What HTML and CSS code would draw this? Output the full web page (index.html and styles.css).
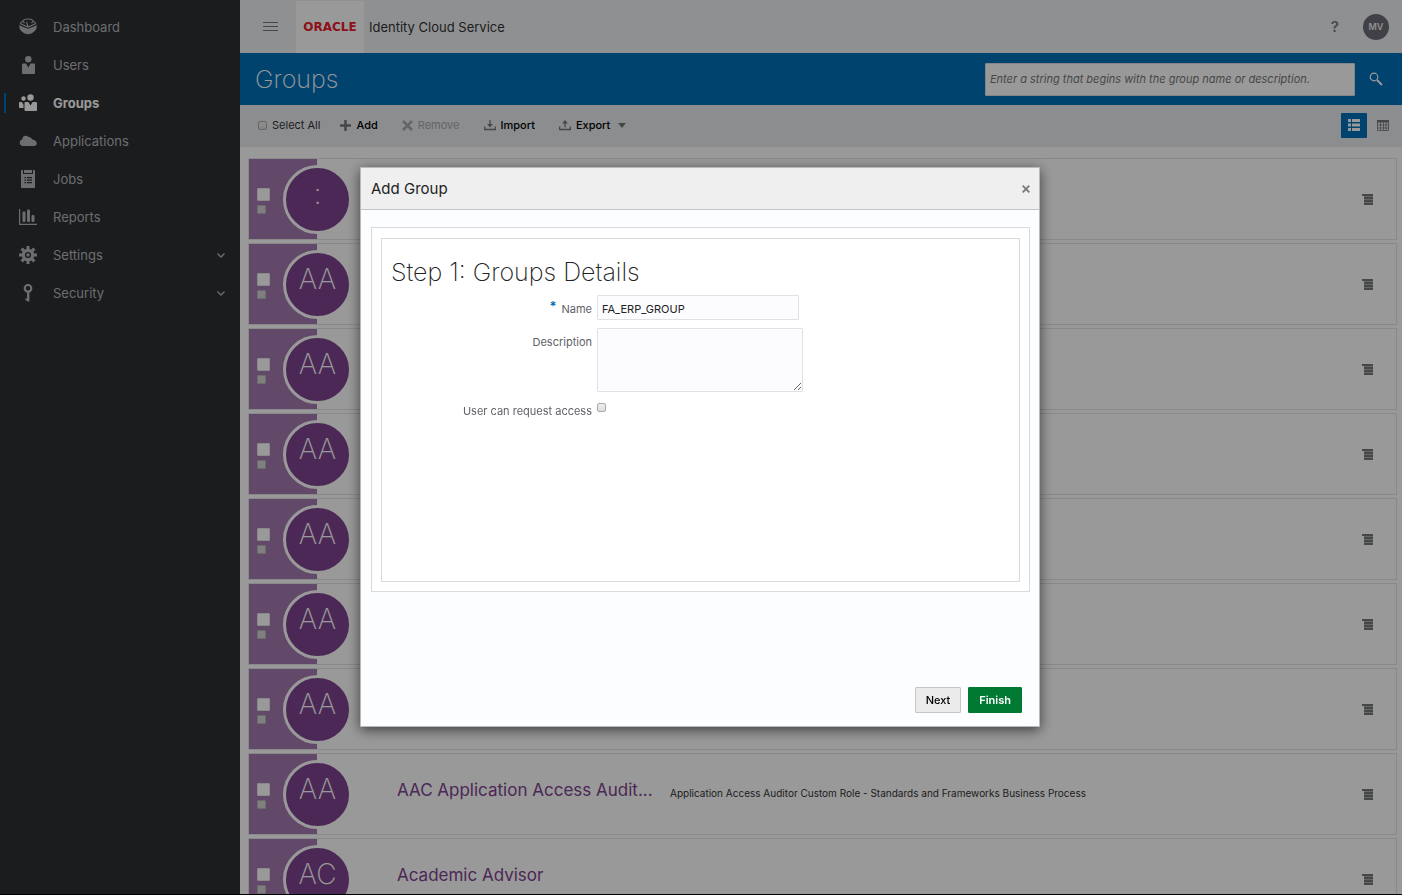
FILE: index.html
```html
<!DOCTYPE html>
<html lang="en">
<head>
<meta charset="utf-8">
<title>Identity Cloud Service - Groups</title>
<link rel="stylesheet" href="styles.css">
</head>
<body>
<div class="app">
  <nav class="sidebar">
    <a class="nav-item" href="#"><svg class="nav-icon" viewBox="0 0 18 18"><path d="M0 7.200 9 10.800l9-3.600A9 9 0 1 1 0 7.200z"/><path fill="none" stroke="currentColor" stroke-width="1.200" d="M1.400 5.800a8.400 8.400 0 0 1 15.200 0L9 9z"/><path fill="none" stroke="currentColor" stroke-width="1.200" d="M9 9 7.600 3.800M4 3.500l1.500 1.500M14 3.500 12.500 5"/></svg>Dashboard</a>
    <a class="nav-item" href="#"><svg class="nav-icon" viewBox="0 0 18 18"><circle cx="9.300" cy="3.300" r="3.200"/><path d="M4 7.500h3l2.300 4 2.300-4H15q1 0 1 1V17q0 1-1 1H4q-1 0-1-1V8.500q0-1 1-1z"/></svg>Users</a>
    <a class="nav-item active" href="#"><svg class="nav-icon" viewBox="0 0 18 18"><circle cx="11.500" cy="3.500" r="3.200"/><circle cx="4.500" cy="4.500" r="2.200"/><path d="M6.500 8h2.800l2.200 3.500L13.700 8H17q1 0 1 1v7q0 1-1 1H6.500q-1 0-1-1V9q0-1 1-1zM.8 8h1.900l1.800 2.500V14H.8q-.8 0-.8-.8V8.800Q0 8 .8 8z"/></svg>Groups</a>
    <a class="nav-item" href="#"><svg class="nav-icon" viewBox="0 0 18 18"><path d="M3.500 14a3.500 3.500 0 0 1-.3-6.800C3.500 3.800 7.500 2.800 9.500 5c2 .2 3 1 3.600 2.200 6 1.300 6 6.800 1.400 6.800z"/></svg>Applications</a>
    <a class="nav-item" href="#"><svg class="nav-icon" viewBox="0 0 18 18"><path fill-rule="evenodd" d="M2 1q0-1 1-1h1v4h10V0h1q1 0 1 1v16q0 1-1 1H3q-1 0-1-1zM5 0h8v3H5zM5.500 7v1.200H7V7zm2.500 0v1.200h5V7zM5.500 9.500v1.200H7V9.500zm2.500 0v1.200h5V9.500zM5.500 12v1.200H7V12zm2.500 0v1.200h5V12z"/></svg>Jobs</a>
    <a class="nav-item" href="#"><svg class="nav-icon" viewBox="0 0 18 18"><path d="M0 1h1.200v14.800H18V17H0z"/><rect x="3.500" y="3.500" width="3" height="10.500" rx="1"/><rect x="8" y="1.500" width="3" height="12.500" rx="1"/><rect x="12.500" y="7" width="3" height="7" rx="1"/></svg>Reports</a>
    <a class="nav-item" href="#"><svg class="nav-icon" viewBox="0 0 18 18"><circle cx="9" cy="9" r="4.700" fill="none" stroke="currentColor" stroke-width="3.200"/><path stroke="currentColor" stroke-width="3" d="M9 0v3.500M9 14.500V18M0 9h3.500M14.500 9H18M2.600 2.600l2.500 2.500M12.900 12.900l2.500 2.500M2.600 15.400l2.500-2.500M12.900 5.100l2.500-2.500"/><circle cx="9" cy="9" r="1.700"/></svg>Settings<svg class="chevron" viewBox="0 0 8 5"><path d="m.5.5 3.500 3.500L7.500.5"/></svg></a>
    <a class="nav-item" href="#"><svg class="nav-icon" viewBox="0 0 18 18"><circle cx="9" cy="4.300" r="3.300" fill="none" stroke="currentColor" stroke-width="2.200"/><path d="M8 8h2.400v9.500H8.500l-1-1H6.500v-2H8z"/></svg>Security<svg class="chevron" viewBox="0 0 8 5"><path d="m.5.5 3.500 3.500L7.500.5"/></svg></a>
  </nav>
  <main class="main">
    <header class="topbar">
      <button class="icon-btn burger" aria-label="Menu"><svg width="15" height="10" viewBox="0 0 15 10"><path stroke="currentColor" d="M0 .5h15M0 4.500h15M0 8.500h15"/></svg></button>
      <span class="logo">ORACLE</span>
      <span class="product">Identity Cloud Service</span>
      <button class="icon-btn help" aria-label="Help">?</button>
      <button class="user">MV</button>
    </header>
    <div class="titlebar">
      <h1 class="page-title">Groups</h1>
      <input class="search" type="text" aria-label="Search groups" placeholder="Enter a string that begins with the group name or description.">
      <button class="icon-btn search-btn" aria-label="Search"><svg width="14" height="14" viewBox="0 0 14 14" fill="none" stroke="currentColor"><circle class="lens" cx="5" cy="5" r="3.800" stroke-width="1.200"/><path stroke-width="2" d="m8 8 5 5"/></svg></button>
    </div>
    <div class="toolbar">
      <label class="select-all"><input class="check" type="checkbox">Select All</label>
      <button class="tool add"><svg width="11" height="11" viewBox="0 0 11 11"><path stroke="currentColor" stroke-width="2.500" d="M5.500 0v11M0 5.500h11"/></svg>Add</button>
      <button class="tool remove" disabled><svg width="11" height="11" viewBox="0 0 11 11"><path stroke="currentColor" stroke-width="2.500" d="m1 1 9 9M10 1l-9 9"/></svg>Remove</button>
      <button class="tool import"><svg width="12" height="11" viewBox="0 0 12 11"><path fill="none" stroke="currentColor" stroke-width="1.300" d="M.7 6.500v3h10.600v-3M6 0v5"/><path d="M3.200 4h5.600L6 7.500z"/></svg>Import</button>
      <button class="tool export"><svg width="12" height="11" viewBox="0 0 12 11"><path fill="none" stroke="currentColor" stroke-width="1.300" d="M.7 6.500v3h10.600v-3M6 3v4.500"/><path d="M3.200 3.500h5.600L6 0z"/></svg>Export<svg class="caret" width="8" height="5" viewBox="0 0 8 5"><path d="M0 0h8L4 5z"/></svg></button>
      <button class="view list-view" aria-label="List view"><svg width="12" height="12" viewBox="0 0 12 12"><path d="M0 0h3v3H0zM4 0h8v3H4zM0 4.500h3v3H0zM4 4.500h8v3H4zM0 9h3v3H0zM4 9h8v3H4z"/></svg></button>
      <button class="view" aria-label="Table view"><svg width="12" height="11" viewBox="0 0 12 11"><path d="M0 0h12v2.500H0z"/><path fill="none" stroke="currentColor" stroke-width=".8" d="M.5 2v8.500h11V2M3.500 2v9M6.500 2v9M9 2v9M0 5h12M0 8h12"/></svg></button>
    </div>
    <ul class="list" id="list"></ul>
  </main>
</div>
<div class="backdrop">
  <section class="dialog" role="dialog" aria-modal="true" aria-labelledby="dialog-title">
    <header class="dialog-head">
      <h2 class="dialog-title" id="dialog-title">Add Group</h2>
      <button class="icon-btn close" aria-label="Close"><svg width="8" height="8" viewBox="0 0 8 8"><path stroke="currentColor" stroke-width="1.800" d="m.7.7 6.600 6.600M7.300.7.700 7.300"/></svg></button>
    </header>
    <div class="panel">
      <form class="step" id="group-form">
        <h3 class="step-title">Step 1: Groups Details</h3>
        <div class="fields">
          <label class="field-label" for="name"><span class="required">*</span>Name</label>
          <input class="field text" id="name" type="text" value="FA_ERP_GROUP">
          <label class="field-label" for="description">Description</label>
          <textarea class="field area" id="description"></textarea>
          <label class="field-label request-label" for="request">User can request access</label>
          <input class="check request" id="request" type="checkbox">
        </div>
      </form>
    </div>
    <footer class="dialog-foot">
      <button class="btn">Next</button>
      <button class="btn primary">Finish</button>
    </footer>
  </section>
</div>
<script src="script.js"></script>
</body>
</html>
```
FILE: styles.css
```css
* { box-sizing: border-box; }
body { margin: 0; font-family: Inter, "Liberation Sans", sans-serif; font-size: 11px; color: #333; background: #fff; overflow: hidden; }
button, input, textarea { font: inherit; margin: 0; }
button { padding: 0; border: 0; background: none; color: inherit; }
svg { fill: currentColor; flex: none; display: block; }

.app { display: flex; height: 100vh; overflow: hidden; border-bottom: 1px solid #000; }
.sidebar { flex: none; width: 240px; padding-top: 8px; background: #2d2f32; }
.nav-item { display: flex; align-items: center; height: 38px; margin-left: 4px; padding: 0 15px; font-size: 13px; color: #b4b8bd; text-decoration: none; }
.nav-icon { width: 18px; height: 18px; margin-right: 16px; }
.active { color: #fff; font-weight: 700; background: linear-gradient(#0070b9, #0070b9) 0 50% / 2px 20px no-repeat; }
.chevron { width: 8px; height: 5px; margin-left: auto; fill: none; stroke: currentColor; stroke-width: 1.3; }

.main { flex: 1; min-width: 0; display: flex; flex-direction: column; }
.topbar { flex: none; display: flex; align-items: center; height: 53px; padding: 0 13px 0 22px; background: #eff1f3; }
.icon-btn { display: flex; align-items: center; justify-content: center; }
.burger { width: 16px; margin-right: 18px; color: #777; }
.logo { display: flex; align-items: center; justify-content: center; align-self: stretch; width: 68px; margin-top: 1px; background: #fff; color: #e8202a; font: bold 12px "DejaVu Sans", sans-serif; }
.product { margin-left: 5px; font-size: 13px; }
.help { margin-left: auto; margin-right: 24px; font-size: 15px; font-weight: 600; color: #76787c; }
.user { width: 26px; height: 26px; border-radius: 50%; background: #6b6c75; color: #eee; font-size: 9px; font-weight: 600; }

.titlebar { flex: none; display: flex; align-items: center; height: 52px; padding: 0 19px 0 15px; background: #0070b9; color: #fff; }
.page-title { margin: 0; font-size: 25px; font-weight: 200; }
.search { width: 370px; height: 33px; margin-left: auto; padding: 0 4px; border: 1px solid #d9dde2; border-radius: 1px; background: #fff; }
.search::placeholder { color: #75777b; opacity: 1; font-style: italic; }
.search-btn { width: 14px; margin-left: 14px; }
.lens { fill: none; }

.toolbar { flex: none; display: flex; align-items: center; height: 42px; padding: 0 13px 2px 18px; background: #e8ebee; }
.select-all { display: flex; align-items: center; gap: 5px; margin-right: 20px; }
.check { appearance: none; width: 9px; height: 9px; border: 1px solid #aaa; border-radius: 2px; background: linear-gradient(#eee, #ddd); }
.tool { display: flex; align-items: center; gap: 5px; margin-right: 24px; font-weight: 500; color: #000; }
.tool svg { color: #75777b; }
.remove, .remove svg { font-weight: 400; color: #a7a9ab; }
.tool .caret { margin-left: 3px; }
.view { display: flex; align-items: center; justify-content: center; width: 12px; height: 25px; color: #75777b; }
.list-view { width: 26px; margin-left: auto; margin-right: 10px; border-radius: 1px; background: #0070b9; color: #fff; }

.list { flex: 1; min-height: 0; margin: 0; padding: 11px 5px 0 8px; list-style: none; overflow: hidden; }
.card { display: flex; align-items: center; height: 82px; margin-bottom: 3px; padding-right: 23px; border: 1px solid #e4e4e4; }
.strip { display: flex; flex-direction: column; justify-content: center; gap: 4px; flex: none; align-self: stretch; width: 68px; padding: 4px 0 0 8px; background: #a57bb0; }
.badge { width: 13px; height: 13px; border: 1px solid #e4e4e4; border-radius: 1px; background: #fff; }
.strip .check { width: 9px; height: 9px; background: #d4d4d4; border-color: #b4b4b4; border-radius: 1px; }
.avatar { display: flex; align-items: center; justify-content: center; flex: none; width: 69px; height: 69px; margin-left: -34px; padding-bottom: 10px; border: 3px solid #fff; border-radius: 50%; background: #7d438f; color: #fff; font-size: 28px; font-weight: 200; }
.group-name { flex: none; width: 273px; margin-left: 45px; padding-bottom: 8px; font-size: 17px; font-weight: 400; color: #7d438f; text-decoration: none; }
.group-text { padding-bottom: 2px; font-size: 10px; }
.row-menu { margin-left: auto; color: #75777b; }

.backdrop { position: fixed; inset: 0; display: flex; align-items: center; justify-content: center; padding: 0 2px 1px 0; background: rgba(0, 0, 0, 0.4); }
.dialog { display: flex; flex-direction: column; width: 680px; min-height: 560px; border: 1px solid #b9babd; background: #fcfdff; box-shadow: 0 3px 12px rgba(0, 0, 0, 0.6); }
.dialog-head { display: flex; align-items: center; justify-content: space-between; height: 42px; padding: 0 9px 0 10px; border-bottom: 1px solid #c3c4c8; background: #efefef; }
.dialog-title { margin: 0; font-size: 15px; font-weight: 400; color: #222; }
.close { color: #76787c; }
.panel { display: flex; margin: 17px 9px 0 10px; padding: 10px 9px 9px; border: 1px solid #d9dade; background: #fff; }
.step { flex: 1; min-height: 344px; padding: 15px 9px; border: 1px solid #d9dade; }
.step-title { margin: 0 0 5px; font-size: 25px; line-height: 36px; font-weight: 200; color: #222; }
.fields { display: grid; grid-template-columns: 201px 1fr; column-gap: 5px; row-gap: 8px; align-items: start; }
.field-label { padding-top: 6px; text-align: right; line-height: 16px; color: #606266; }
.request-label { padding-top: 3px; }
.required { margin-right: 5px; color: #0067a8; font-size: 13px; font-weight: 600; line-height: 0; vertical-align: 2px; }
.field { border: 1px solid #dfe1e6; border-radius: 1px; background: #fcfcff; color: #222; }
.text { width: 202px; height: 25px; padding: 2px 4px 0; }
.area { width: 206px; height: 64px; }
.request { margin-top: 3px; }
.dialog-foot { display: flex; justify-content: flex-end; gap: 7px; margin-top: auto; padding: 0 17px 13px; }
.btn { height: 26px; padding: 0 10px; border: 1px solid #c4c5c8; border-radius: 1px; background: #ebebeb; color: #000; font-weight: 500; }
.primary { border-color: #007a33; background: #007a33; color: #fff; font-weight: 600; }
```
FILE: script.js
```js
const groups = [
  [":", "", ""],
  ["AA", "", ""],
  ["AA", "", ""],
  ["AA", "", ""],
  ["AA", "", ""],
  ["AA", "", ""],
  ["AA", "", ""],
  ["AA", "AAC Application Access Audit...", "Application Access Auditor Custom Role - Standards and Frameworks Business Process"],
  ["AC", "Academic Advisor", ""]
];
document.getElementById("list").innerHTML = groups.map(([initials, name, text]) => `
  <li class="card">
    <div class="strip"><span class="badge"></span><input class="check" type="checkbox" aria-label="Select group"></div>
    <span class="avatar">${initials}</span>
    <a class="group-name" href="#">${name}</a>
    <span class="group-text">${text}</span>
    <button class="row-menu" aria-label="Group actions"><svg width="11" height="11" viewBox="0 0 11 11"><path opacity=".6" d="M2 0h9v11H2z"/><path d="M0 0h11v2H0zM2 3h9v2H2zM2 6h9v2H2zM2 9h9v2H2z"/></svg></button>
  </li>`).join("");
```
